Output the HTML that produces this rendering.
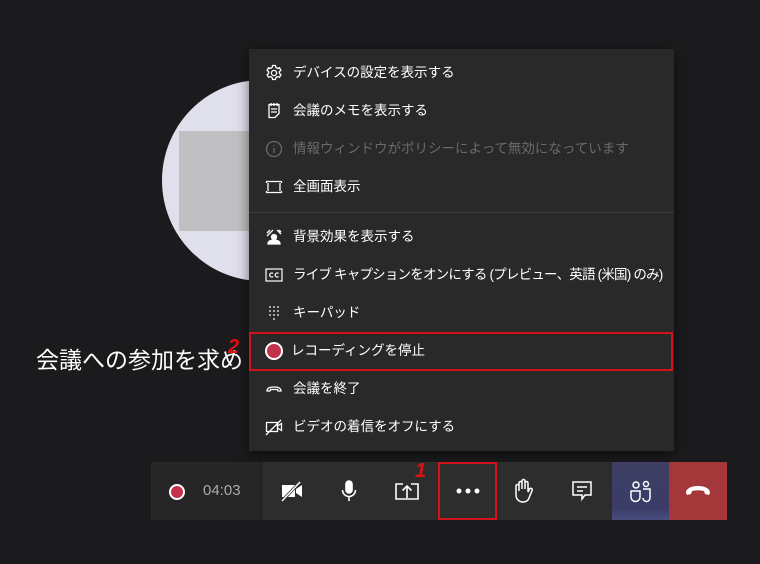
<!DOCTYPE html>
<html><head><meta charset="utf-8"><style>
body{margin:0;width:760px;height:564px;background:#1b1b1d;position:relative;overflow:hidden;font-family:"Liberation Sans","Noto Sans CJK JP",sans-serif;}
.a{position:absolute}
.menu{left:249px;top:49px;width:425px;height:402px;background:#292929;box-shadow:0 4px 12px rgba(0,0,0,.5)}
.it{position:absolute;left:0;width:425px;height:38px;line-height:38px;color:#fff;font-size:13.5px;white-space:nowrap}
.it .t{position:absolute;left:44px}
.it svg{position:absolute;left:16px;top:10px}
.dis{color:#6a6a6a}
.tb{left:151px;top:462px;width:576px;height:58px;background:#2d2d2d}
.ic{position:absolute;top:0;height:58px;width:58px;display:flex;align-items:center;justify-content:center}
</style></head><body>
<div class="a" style="left:162px;top:80px;width:200px;height:201px;border-radius:50%;background:#e0dfec"></div>
<div class="a" style="left:179px;top:131px;width:80px;height:100px;background:#c0c0c2"></div>
<div class="a" style="left:36px;top:341px;color:#fff;font-size:23px;white-space:nowrap">会議への参加を求め</div>
<div class="a" style="left:228px;top:336px;color:#e01010;font-size:20px;font-weight:bold;font-style:italic">2</div>
<div class="a menu">
<div class="it" style="top:5px"><svg width="18" height="18" viewBox="0 0 18 18" fill="none" stroke="#fff" stroke-width="1.3"><circle cx="9" cy="9" r="2.6"/><path d="M7.6 1.5h2.8l.5 2 1.6.9 2-.6 1.4 2.4-1.5 1.4v1.8l1.5 1.4-1.4 2.4-2-.6-1.6.9-.5 2H7.6l-.5-2-1.6-.9-2 .6-1.4-2.4 1.5-1.4V7.6L2.1 6.2l1.4-2.4 2 .6 1.6-.9z"/></svg><span class="t">デバイスの設定を表示する</span></div>
<div class="it" style="top:43px"><svg width="18" height="18" viewBox="0 0 18 18" fill="none" stroke="#fff" stroke-width="1.3"><path d="M4 2.5h10v9l-4 4H4z M6 1v3M9 1v3M12 1v3M6 7h6M6 10h6"/></svg><span class="t">会議のメモを表示する</span></div>
<div class="it dis" style="top:81px"><svg width="18" height="18" viewBox="0 0 18 18" fill="none" stroke="#6a6a6a" stroke-width="1.3"><circle cx="9" cy="9" r="7.5"/><path d="M9 8v5M9 5v1"/></svg><span class="t">情報ウィンドウがポリシーによって無効になっています</span></div>
<div class="it" style="top:119px"><svg width="18" height="18" viewBox="0 0 18 18" fill="none" stroke="#fff" stroke-width="1.3"><path d="M1.5 5V3.5h15V5M1.5 13v1.5h15V13M3 5v8M15 5v8"/></svg><span class="t">全画面表示</span></div>
<div class="a" style="left:0;top:163px;width:425px;height:1px;background:#3b3b3b"></div>
<div class="it" style="top:169px"><svg width="18" height="18" viewBox="0 0 18 18" fill="none" stroke="#fff" stroke-width="1.3"><path d="M2 5l3-3M2 8l6-6M12 2l4 4M14 2l2 2"/><circle cx="9" cy="9" r="2.5" fill="#fff"/><path d="M3 16c0-3 3-4 6-4s6 1 6 4z" fill="#fff"/></svg><span class="t">背景効果を表示する</span></div>
<div class="it" style="top:207px"><svg width="18" height="18" viewBox="0 0 18 18" fill="none" stroke="#fff" stroke-width="1.2"><rect x="1" y="3" width="16" height="12"/><path d="M8 7.5a2 2 0 1 0 0 3M13.5 7.5a2 2 0 1 0 0 3"/></svg><span class="t" style="letter-spacing:-0.8px">ライブ キャプションをオンにする (プレビュー、英語 (米国) のみ)</span></div>
<div class="it" style="top:245px"><svg width="18" height="18" viewBox="0 0 18 18" fill="#fff"><circle cx="5" cy="3" r=".9"/><circle cx="9" cy="3" r=".9"/><circle cx="13" cy="3" r=".9"/><circle cx="5" cy="7" r=".9"/><circle cx="9" cy="7" r=".9"/><circle cx="13" cy="7" r=".9"/><circle cx="5" cy="11" r=".9"/><circle cx="9" cy="11" r=".9"/><circle cx="13" cy="11" r=".9"/><circle cx="9" cy="15" r=".9"/></svg><span class="t">キーパッド</span></div>
<div class="it" style="top:283px"><svg width="20" height="20" viewBox="0 0 20 20" style="left:15px;top:9px"><circle cx="10" cy="10" r="8" fill="#c4314b" stroke="#fff" stroke-width="2"/></svg><span class="t" style="left:42px">レコーディングを停止</span></div>
<div class="a" style="left:0;top:283px;width:420px;height:35px;border:2px solid #d0141b"></div>
<div class="it" style="top:321px"><svg width="18" height="18" viewBox="0 0 18 18" fill="none" stroke="#fff" stroke-width="1.3"><path d="M2 11c0-3 3-4 7-4s7 1 7 4l-3 0-.5-1.5h-7L5 11z"/></svg><span class="t">会議を終了</span></div>
<div class="it" style="top:359px"><svg width="18" height="18" viewBox="0 0 18 18" fill="none" stroke="#fff" stroke-width="1.3"><path d="M1.5 4.5h11v9h-11zM12.5 8l4-2.5v7l-4-2.5M1 17L16 2"/></svg><span class="t">ビデオの着信をオフにする</span></div>
</div>
<div class="a tb">
<div class="a" style="left:0;top:0;width:110px;height:58px;background:#262626"></div>
<svg class="a" style="left:17px;top:21px" width="18" height="18"><circle cx="9" cy="9" r="7" fill="#c4314b" stroke="#fff" stroke-width="2"/></svg>
<div class="a" style="left:52px;top:20px;color:#aaa;font-size:15px">04:03</div>
<div class="a" style="left:110px;top:0;width:1px;height:58px;background:#1e1e1e"></div>
<div class="ic" style="left:112px"><svg width="24" height="24" viewBox="0 0 24 24" fill="#fff"><path d="M2 6h13v12H2z M16 10l6-4v12l-6-4z"/><path d="M2 22L20 3" stroke="#2d2d2d" stroke-width="3"/><path d="M2 22L20 3" stroke="#fff" stroke-width="1.5"/></svg></div>
<div class="ic" style="left:169px"><svg width="24" height="24" viewBox="0 0 24 24" fill="none" stroke="#fff" stroke-width="1.6"><rect x="9" y="2" width="6" height="12" rx="3" fill="#fff"/><path d="M5.5 11a6.5 6.5 0 0 0 13 0M12 17.5V22"/></svg></div>
<div class="ic" style="left:227px"><svg width="26" height="24" viewBox="0 0 26 24" fill="none" stroke="#fff" stroke-width="1.6"><path d="M9 5H2v15h22V5h-7M13 19V7M8.5 11.5L13 7l4.5 4.5"/></svg></div>
<div class="a" style="left:264px;top:-2px;color:#e01010;font-size:20px;font-weight:bold;font-style:italic">1</div>
<div class="ic" style="left:287px;width:59px"><svg width="24" height="6"><circle cx="3" cy="3" r="2.5" fill="#fff"/><circle cx="12" cy="3" r="2.5" fill="#fff"/><circle cx="21" cy="3" r="2.5" fill="#fff"/></svg></div>
<div class="a" style="left:287px;top:0;width:55px;height:54px;border:2px solid #d0141b"></div>
<div class="ic" style="left:343px"><svg width="24" height="26" viewBox="0 0 24 26" fill="none" stroke="#fff" stroke-width="1.5"><path d="M8 13V5a1.5 1.5 0 0 1 3 0v6V3a1.5 1.5 0 0 1 3 0v8V5a1.5 1.5 0 0 1 3 0v9l1.5-3a1.5 1.5 0 0 1 2.6 1.5L18 20c-1 3-3 4-6 4-4 0-7-3-7-7V8a1.5 1.5 0 0 1 3 0z"/></svg></div>
<div class="ic" style="left:402px"><svg width="24" height="24" viewBox="0 0 24 24" fill="none" stroke="#fff" stroke-width="1.5"><path d="M3 3h18v13h-6l-3 4v-4H3zM7 8h10M7 12h6"/></svg></div>
<div class="ic" style="left:461px;width:57px;background:linear-gradient(#3e3f63,#3b3c68 80%,#4a4d80)"><svg width="24" height="24" viewBox="0 0 24 24" fill="none" stroke="#fff" stroke-width="1.5"><circle cx="7" cy="6" r="3"/><circle cx="17" cy="5" r="2.5"/><path d="M2 12h9v6a4.5 4.5 0 0 1-9 0zM14 10h7v9a3.5 3.5 0 0 1-7 0"/></svg></div>
<div class="ic" style="left:518px;background:#a4373a"><svg width="26" height="14" viewBox="0 0 26 14" fill="#fff"><path d="M1 9c0-5 6-7 12-7s12 2 12 7l-1 2-4-1-1-3c-4-1-8-1-12 0l-1 3-4 1z"/></svg></div>
</div>
</body></html>
